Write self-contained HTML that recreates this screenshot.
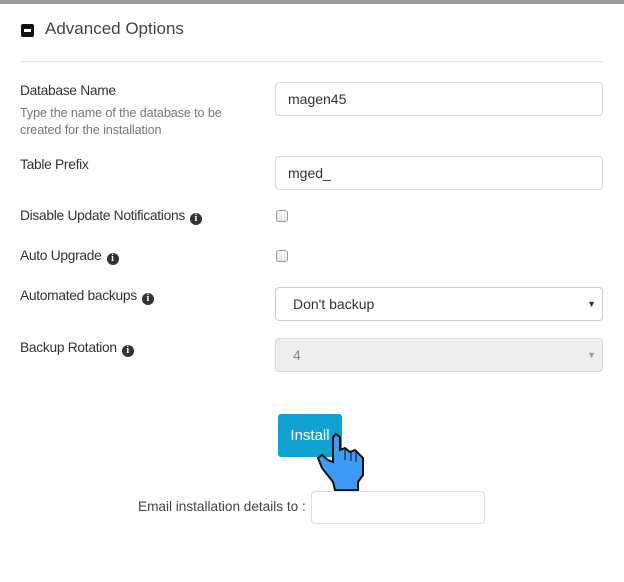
<!DOCTYPE html>
<html><head><meta charset="utf-8"><style>
body{margin:0;width:624px;height:582px;background:#fff;position:relative;font-family:"Liberation Sans",sans-serif;overflow:hidden}
.a{position:absolute;white-space:nowrap}
.lbl{font-size:13.8px;color:#333;letter-spacing:-0.3px}
.inp{position:absolute;box-sizing:border-box;border:1px solid #d9d9d9;border-radius:4px;background:#fff;font-size:14px;color:#333;padding-left:12px;display:flex;align-items:center}
.cb{position:absolute;width:12px;height:12px;border:1px solid #999;border-radius:3px;background:linear-gradient(#fafafa,#e6e6e6);box-sizing:border-box}
.i{display:inline-block;width:12px;height:12px;border-radius:50%;background:#333;color:#fff;font-size:10px;font-weight:bold;text-align:center;line-height:12px;vertical-align:-1px;margin-left:5px;font-family:"Liberation Serif",serif;letter-spacing:0}
.arr{position:absolute;right:6px;font-size:9px;color:#333}
</style></head><body>
<div class="a" style="left:0;top:0;width:624px;height:4px;background:#9a9a9a"></div>
<div class="a" style="left:21px;top:24px;width:13px;height:13px;background:#111;border-radius:2px"><div style="position:absolute;left:3px;top:5px;width:7px;height:3px;background:#fff"></div></div>
<div class="a" style="left:45px;top:19px;font-size:17px;color:#444">Advanced Options</div>
<div class="a" style="left:20px;top:61px;width:583px;height:1px;background:#e5e5e5"></div>

<div class="a lbl" style="left:20px;top:83px">Database Name</div>
<div class="a" style="left:20px;top:105px;font-size:12.6px;color:#777;line-height:17px;letter-spacing:-0.1px">Type the name of the database to be<br>created for the installation</div>
<div class="inp" style="left:275px;top:82px;width:328px;height:34px">magen45</div>

<div class="a lbl" style="left:20px;top:157px">Table Prefix</div>
<div class="inp" style="left:275px;top:156px;width:328px;height:34px">mged_</div>

<div class="a lbl" style="left:20px;top:208px">Disable Update Notifications<span class="i">i</span></div>
<div class="cb" style="left:276px;top:210px"></div>
<div class="a lbl" style="left:20px;top:248px">Auto Upgrade<span class="i">i</span></div>
<div class="cb" style="left:276px;top:250px"></div>
<div class="a lbl" style="left:20px;top:288px">Automated backups<span class="i">i</span></div>
<div class="inp" style="left:275px;top:287px;width:328px;height:34px;border-color:#ccc;padding-left:17px">Don't backup<span class="arr">▼</span></div>
<div class="a lbl" style="left:20px;top:340px">Backup Rotation<span class="i">i</span></div>
<div class="inp" style="left:275px;top:338px;width:328px;height:34px;background:#eee;color:#888;padding-left:17px">4<span class="arr" style="color:#999">▼</span></div>

<div class="a" style="left:278px;top:414px;width:64px;height:43px;background:#0fa3d4;border-radius:3px;color:#fff;font-size:15px;line-height:43px;text-align:center">Install</div>
<svg class="a" style="left:0;top:0" width="624" height="582"><polygon points="333,437 336,434 340,437 340,450 345,448 350,452 355,450 360,455 363,458 363,475 358,482 358,490 335,490 333,482 322,468 318,458 322,455 328,460 333,462" fill="#3d9bf5" stroke="#111" stroke-width="2"/><line x1="345" y1="449" x2="345" y2="460" stroke="#111"/><line x1="351" y1="452" x2="351" y2="461" stroke="#111"/><line x1="356" y1="452" x2="356" y2="462" stroke="#111"/></svg>

<div class="a" style="left:138px;top:499px;font-size:13.6px;color:#444">Email installation details to :</div>
<div class="inp" style="left:311px;top:491px;width:174px;height:33px;border-color:#ddd"></div>
</body></html>
